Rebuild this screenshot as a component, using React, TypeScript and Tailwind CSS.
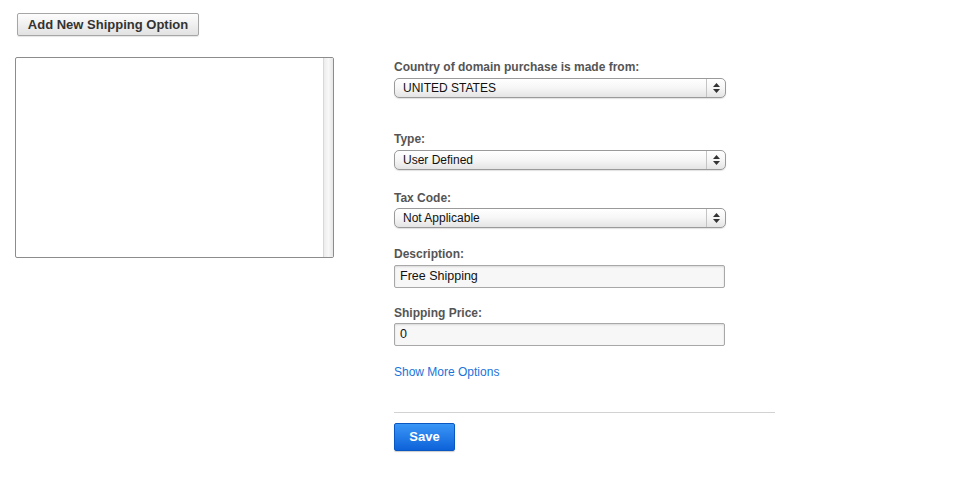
import React from 'react';

const SelectBox = ({ value }: { value: string }) => (
  <div className="relative flex h-[20px] w-[332px] items-center rounded-[5px] border border-[#9a9a9a] bg-gradient-to-b from-white via-[#f6f6f6] to-[#e4e4e4] shadow-[0_1px_1px_rgba(0,0,0,0.12)]">
    <span className="flex-1 pl-[8px] text-[12px] leading-none text-[#111]">{value}</span>
    <div className="flex h-full w-[19px] flex-col items-center justify-center gap-[2px] border-l border-[#c4c4c4]">
      <svg width="7" height="4" viewBox="0 0 7 4"><path d="M3.5 0 L7 4 L0 4 Z" fill="#333" /></svg>
      <svg width="7" height="4" viewBox="0 0 7 4"><path d="M0 0 L7 0 L3.5 4 Z" fill="#333" /></svg>
    </div>
  </div>
);

const TextBox = ({ value }: { value: string }) => (
  <div className="flex h-[23px] w-[331px] items-center rounded-[2px] border border-[#a8a8a8] bg-[#f7f7f7] pl-[5px] text-[12.5px] text-[#111] shadow-[inset_0_1px_2px_rgba(0,0,0,0.12)]">
    {value}
  </div>
);

const Label = ({ children, className = '' }: { children: React.ReactNode; className?: string }) => (
  <div className={`text-[12px] font-bold leading-[14px] text-[#555] ${className}`}>{children}</div>
);

export default function App() {
  return (
    <div className="min-h-[498px] bg-white font-['Liberation_Sans',Arial,sans-serif]">
      <div className="flex pl-[17px] pt-[13px]">
        <button className="block h-[23px] w-[182px] rounded-[2px] border border-[#a6a6a6] bg-gradient-to-b from-[#fdfdfd] to-[#e2e2e2] text-[13px] font-bold text-[#333] shadow-[0_1px_1px_rgba(0,0,0,0.1)]">
          Add New Shipping Option
        </button>
      </div>

      <div className="mt-[21px] flex items-start">
        {/* list box */}
        <div className="ml-[15px] flex h-[201px] w-[319px] rounded-[2px] border border-[#8c8c8c] bg-white">
          <div className="flex-1" />
          <div className="w-[10px] border-l border-[#d8d8d8] bg-gradient-to-r from-[#ececec] via-[#f8f8f8] to-[#e6e6e6]" />
        </div>

        {/* form */}
        <div className="ml-[60px] pt-[3px]">
          <Label>Country of domain purchase is made from:</Label>
          <div className="mt-[4px]">
            <SelectBox value="UNITED STATES" />
          </div>

          <Label className="mt-[34px]">Type:</Label>
          <div className="mt-[4px]">
            <SelectBox value="User Defined" />
          </div>

          <Label className="mt-[21px]">Tax Code:</Label>
          <div className="mt-[3px]">
            <SelectBox value="Not Applicable" />
          </div>

          <Label className="mt-[19px]">Description:</Label>
          <div className="mt-[4px]">
            <TextBox value="Free Shipping" />
          </div>

          <Label className="mt-[18px]">Shipping Price:</Label>
          <div className="mt-[3px]">
            <TextBox value="0" />
          </div>

          <div className="mt-[19px] text-[12px] leading-[14px]">
            <a href="#" className="text-[#1a73d9]">Show More Options</a>
          </div>

          <div className="mt-[33px] h-px w-[381px] bg-[#d2d2d2]" />

          <button className="mt-[10px] block h-[28px] w-[61px] rounded-[2px] border border-[#0a57c2] bg-gradient-to-b from-[#3a96f7] to-[#0c62d8] text-[13px] font-bold text-white shadow-[0_1px_1px_rgba(0,0,0,0.2)]">
            Save
          </button>
        </div>
      </div>
    </div>
  );
}
